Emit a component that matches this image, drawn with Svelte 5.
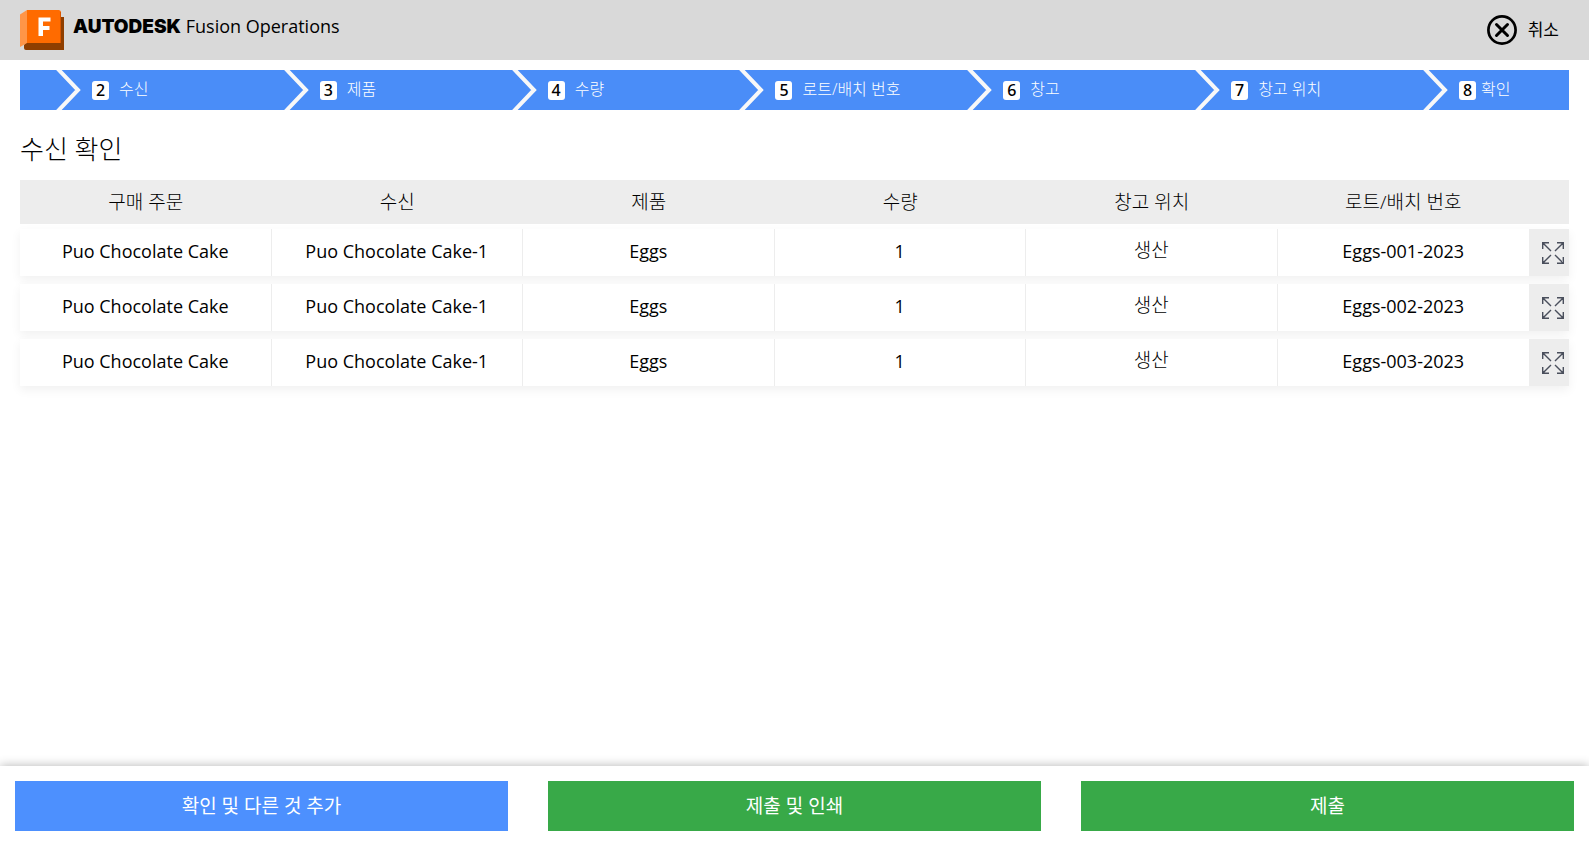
<script>
  const steps = [
    { n: 2, label: '수신' },
    { n: 3, label: '제품' },
    { n: 4, label: '수량' },
    { n: 5, label: '로트/배치 번호' },
    { n: 6, label: '창고' },
    { n: 7, label: '창고 위치' },
    { n: 8, label: '확인' }
  ];
  const columns = ['구매 주문', '수신', '제품', '수량', '창고 위치', '로트/배치 번호'];
  const rows = ['001', '002', '003'].map((id) => [
    'Puo Chocolate Cake', 'Puo Chocolate Cake-1', 'Eggs', '1', '생산', `Eggs-${id}-2023`
  ]);
</script>

<div class="page">
  <header>
    <div class="brand">
      <svg class="logo" width="44" height="40" viewBox="0 0 44 40" aria-hidden="true">
        <path fill="#8f3e00" d="M6 32.500H40V7h4v33H6q-2 0-2-2v-3z" />
        <path fill="#ff9548" d="M0 4.500 7 0v33L0 37z" />
        <path fill="#ff6b00" d="M7 0h31.500Q41 0 41 2.500V33H7z" />
        <path fill="#d95700" d="M40 2h1v31h-1z" />
        <path fill="#fff" d="M18.500 7.500H30.500v4h-7.500v4.500h6.500v4h-6.500v6h-4.500z" />
      </svg>
      <span class="name"><b>AUTODESK</b> Fusion Operations</span>
    </div>
    <button class="cancel" type="button">
      <svg width="30" height="30" viewBox="0 0 30 30" fill="none" stroke="#000" aria-hidden="true">
        <circle cx="15" cy="15" r="13.600" stroke-width="2.700" />
        <path d="m9.500 9.500 11 11m0-11-11 11" stroke-width="3" stroke-linecap="round" />
      </svg>
      <span>취소</span>
    </button>
  </header>

  <main>
    <ol class="steps">
      {#each steps as step}
        <li>
          <svg width="25" height="40" viewBox="0 0 25 40" fill="none" stroke="#f8f8f8" stroke-width="4" aria-hidden="true">
            <path d="M1-2 22 20 1 42" />
          </svg>
          <span class="num">{step.n}</span>
          <span class="label">{step.label}</span>
        </li>
      {/each}
    </ol>

    <h1>수신 확인</h1>

    <table>
      <thead>
        <tr>
          {#each columns as column}<th scope="col">{column}</th>{/each}
          <td></td>
        </tr>
      </thead>
      <tbody>
        {#each rows as row}
          <tr>
            {#each row as cell, i}<td class:location={i === 4}>{cell}</td>{/each}
            <td class="action">
              <button type="button" aria-label="확대">
                <svg width="22" height="22" viewBox="0 0 22 22" fill="none" stroke="#4a4f5c" stroke-width="1.400" aria-hidden="true">
                  <path d="M7 .700H.700V7M.700.700 9 9M15 .700h6.300V7m0-6.300L13 9M7 21.300H.700V15m0 6.300L9 13m6 8.300h6.300V15m0 6.300L13 13" />
                </svg>
              </button>
            </td>
          </tr>
        {/each}
      </tbody>
    </table>
  </main>

  <footer>
    <button class="add" type="button">확인 및 다른 것 추가</button>
    <button type="button">제출 및 인쇄</button>
    <button type="button">제출</button>
  </footer>
</div>

<style>
  :global(body) {
    margin: 0;
    background: #fff;
  }
  .page {
    display: flex;
    flex-direction: column;
    min-height: 100vh;
    color: #000;
    font-family: 'Open Sans', 'Noto Sans CJK KR', sans-serif;
    font-size: 18px;
  }
  button {
    border: 0;
    padding: 0;
    font: inherit;
    color: inherit;
    background: none;
    cursor: pointer;
  }
  svg {
    display: block;
    flex: none;
  }
  header {
    display: flex;
    justify-content: space-between;
    align-items: center;
    height: 60px;
    padding: 0 30px 0 20px;
    background: #d9d9d9;
  }
  .brand {
    display: flex;
    gap: 9px;
  }
  .name {
    font-size: 18px;
    line-height: 32px;
    font-weight: 500;
  }
  .name b {
    font-family: Inter, sans-serif;
    font-size: 19px;
    font-weight: 900;
  }
  .cancel {
    display: flex;
    align-items: center;
    gap: 11px;
  }
  .cancel span {
    padding-bottom: 3px;
    font-size: 17px;
  }
  main {
    flex: 1;
    padding: 10px 20px;
  }
  .steps {
    display: grid;
    grid-template-columns: repeat(6, 1fr) 146px;
    margin: 0;
    padding: 0 0 0 36px;
    height: 40px;
    list-style: none;
    background: #4a8df8;
    color: #fff;
    font-size: 16px;
  }
  .steps li {
    display: flex;
    align-items: center;
    min-width: 0;
    white-space: nowrap;
  }
  .num {
    width: 17px;
    margin: 0 10px 0 11px;
    border-radius: 3px;
    background: #fff;
    color: #000;
    font-family: 'Noto Sans', sans-serif;
    font-weight: 500;
    line-height: 19px;
    text-align: center;
  }
  .label {
    padding-bottom: 4px;
    font-weight: 300;
  }
  .steps li:last-child .num {
    margin-right: 5px;
  }
  h1 {
    margin: 19px 0 11px;
    font-size: 26px;
    font-weight: 300;
    line-height: 40px;
  }
  table,
  thead {
    display: block;
  }
  tbody {
    display: grid;
    gap: 8px;
    padding-top: 5px;
  }
  tr {
    display: grid;
    grid-template-columns: repeat(6, 1fr) 40px;
  }
  thead tr {
    height: 44px;
    background: #ededed;
  }
  tbody tr {
    height: 47px;
    background: #fff;
    box-shadow: 0 4px 10px rgba(0, 0, 0, 0.06);
  }
  th,
  td {
    padding: 0;
    font-weight: 400;
    line-height: 44px;
    text-align: center;
  }
  th,
  .location {
    font-size: 19px;
    font-weight: 300;
  }
  .location {
    line-height: 42px;
  }
  tbody td {
    border-right: 1px solid #ededed;
  }
  tbody td:nth-child(6) {
    border: 0;
  }
  tbody .action {
    border: 0;
    background: #ededed;
  }
  .action button {
    display: flex;
    align-items: center;
    justify-content: center;
    width: 100%;
    height: 100%;
    padding: 1px 0 0 7px;
  }
  footer {
    display: grid;
    grid-template-columns: repeat(3, 1fr);
    gap: 40px;
    padding: 15px;
    background: #fff;
    box-shadow: 0 0 10px rgba(0, 0, 0, 0.3);
  }
  footer button {
    height: 50px;
    padding-bottom: 3px;
    background: #38a948;
    color: #fff;
    font-size: 19px;
  }
  footer .add {
    background: #4d90fe;
  }
</style>
